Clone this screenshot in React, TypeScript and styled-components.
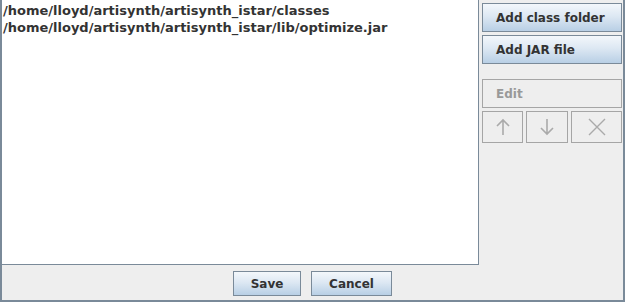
import * as React from "react"
import styled, { createGlobalStyle } from "styled-components"

const GlobalStyle = createGlobalStyle`
  html, body {
    margin: 0;
    padding: 0;
    background: #eeeeee;
  }
`

const Window = styled.div`
  box-sizing: border-box;
  width: 625px;
  height: 302px;
  background: #eeeeee;
  border-left: 2px solid #7a8a99;
  border-right: 2px solid #7a8a99;
  border-bottom: 2px solid #7a8a99;
  display: flex;
  flex-direction: column;
  font-family: "DejaVu Sans", sans-serif;
  font-weight: bold;
  color: #333333;
`

const Main = styled.div`
  display: flex;
  height: 265px;
`

const PathList = styled.div`
  box-sizing: border-box;
  width: 479px;
  background: #ffffff;
  border-right: 1px solid #7a8a99;
  border-bottom: 1px solid #7a8a99;
  padding: 2px 0 0 1px;
  font-size: 13px;
  line-height: 17px;
`

const PathItem = styled.div`
  white-space: nowrap;
`

const Side = styled.div`
  flex: 1;
  display: flex;
  flex-direction: column;
  padding: 3px 1px 0 3px;
`

const Button = styled.button<{ $disabled?: boolean; $center?: boolean }>`
  box-sizing: border-box;
  height: ${p => (p.$center ? "25px" : "29px")};
  margin: 0;
  padding: ${p => (p.$center ? "0" : "0 0 0 13px")};
  display: flex;
  align-items: center;
  justify-content: ${p => (p.$center ? "center" : "flex-start")};
  font-family: "DejaVu Sans", sans-serif;
  font-weight: bold;
  font-size: 12px;
  color: ${p => (p.$disabled ? "#999999" : "#333333")};
  border: 1px solid ${p => (p.$disabled ? "#a5a5a5" : "#7a8a99")};
  background: ${p =>
    p.$disabled
      ? "#eeeeee"
      : "linear-gradient(to bottom, #f3f7fb 0%, #dde8f3 45%, #b8cfe5 100%)"};
`

const SideButton = styled(Button)`
  width: 100%;
  & + & {
    margin-top: 3px;
  }
`

const Spacer = styled.div`
  height: 15px;
`

const ArrowRow = styled.div`
  display: flex;
  gap: 3px;
  margin-top: 3px;
`

const IconButton = styled.button<{ $w: number }>`
  box-sizing: border-box;
  width: ${p => p.$w}px;
  height: 32px;
  padding: 0;
  display: flex;
  align-items: center;
  justify-content: center;
  background: #eeeeee;
  border: 1px solid #a5a5a5;
`

const Footer = styled.div`
  display: flex;
  justify-content: center;
  gap: 10px;
  padding-top: 6px;
`

const Up = () => (
  <svg width="16" height="18" viewBox="0 0 16 18">
    <path d="M8 2 V17 M2 8 L8 2 L14 8" fill="none" stroke="#aaaaaa" strokeWidth="1.6" />
  </svg>
)

const Down = () => (
  <svg width="16" height="18" viewBox="0 0 16 18">
    <path d="M8 1 V16 M2 10 L8 16 L14 10" fill="none" stroke="#aaaaaa" strokeWidth="1.6" />
  </svg>
)

const Cross = () => (
  <svg width="20" height="20" viewBox="0 0 20 20">
    <path d="M2 2 L18 18 M18 2 L2 18" fill="none" stroke="#aaaaaa" strokeWidth="1.4" />
  </svg>
)

export default function App() {
  return (
    <>
      <GlobalStyle />
      <Window>
        <Main>
          <PathList>
            <PathItem>/home/lloyd/artisynth/artisynth_istar/classes</PathItem>
            <PathItem>/home/lloyd/artisynth/artisynth_istar/lib/optimize.jar</PathItem>
          </PathList>
          <Side>
            <SideButton>Add class folder</SideButton>
            <SideButton>Add JAR file</SideButton>
            <Spacer />
            <SideButton $disabled>Edit</SideButton>
            <ArrowRow>
              <IconButton $w={41}><Up /></IconButton>
              <IconButton $w={42}><Down /></IconButton>
              <IconButton $w={51}><Cross /></IconButton>
            </ArrowRow>
          </Side>
        </Main>
        <Footer>
          <Button $center style={{ width: 68 }}>Save</Button>
          <Button $center style={{ width: 81 }}>Cancel</Button>
        </Footer>
      </Window>
    </>
  )
}
